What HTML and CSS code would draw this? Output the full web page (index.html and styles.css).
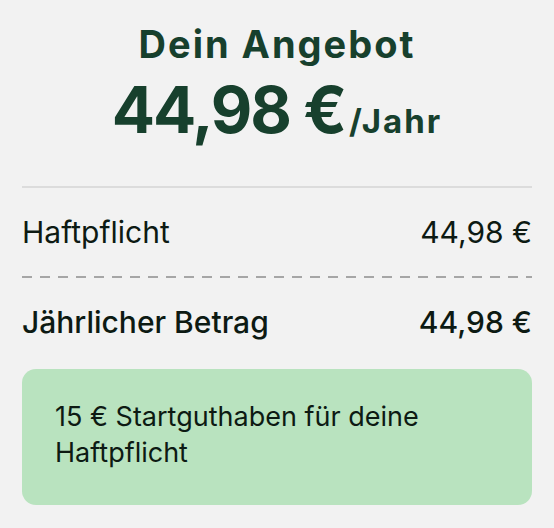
FILE: index.html
```html
<!DOCTYPE html>
<html lang="de">
<head>
  <meta charset="UTF-8">
  <title>Dein Angebot</title>
  <meta name="viewport" content="width=device-width, initial-scale=1.0">
  <link rel="stylesheet" href="styles.css">
</head>
<body>

  <div class="offer">
    <h2>Dein Angebot</h2>
    <div class="price">44,98 €<span class="per">/Jahr</span></div>

    <div class="row">
      <span>Haftpflicht</span>
      <span>44,98 €</span>
    </div>

    <div class="row total">
      <span>Jährlicher Betrag</span>
      <span>44,98 €</span>
    </div>

    <div class="bonus">
      15 € Startguthaben für deine Haftpflicht
    </div>
  </div>

</body>
</html>
```

FILE: styles.css
```css
body {
  font-family: 'Inter', sans-serif;
  background: #f2f2f2;
  color: #0d1a13;
  margin: 0;
  padding: 22px 22px 0;
}
h2 {
  text-align: center;
  font-size: 38px;
  font-weight: 700;
  letter-spacing: 2px;
  color: #17402d;
  line-height: 44px;
  margin: 0;
}
.price {
  text-align: center;
  font-size: 64px;
  font-weight: 700;
  letter-spacing: -2px;
  color: #17402d;
  line-height: 72px;
  margin-top: 8px;
  padding-bottom: 40px;
  border-bottom: 2px solid #dcdcdc;
}
.per {
  font-size: 33px;
  line-height: 1;
  letter-spacing: 2px;
  margin-left: 4px;
}
.row {
  display: flex;
  justify-content: space-between;
  font-size: 30px;
  line-height: 36px;
  padding: 26px 0;
}
.row.total {
  font-weight: 500;
  padding-top: 28px;
  background: repeating-linear-gradient(90deg, #a6a6a6 0 10px, transparent 10px 18px) top left / 100% 2px no-repeat;
}
.bonus {
  background: #b9e3bf;
  border-radius: 14px;
  font-size: 27px;
  line-height: 36px;
  padding: 30px 33px 34px;
  margin-top: 3px;
}
```
